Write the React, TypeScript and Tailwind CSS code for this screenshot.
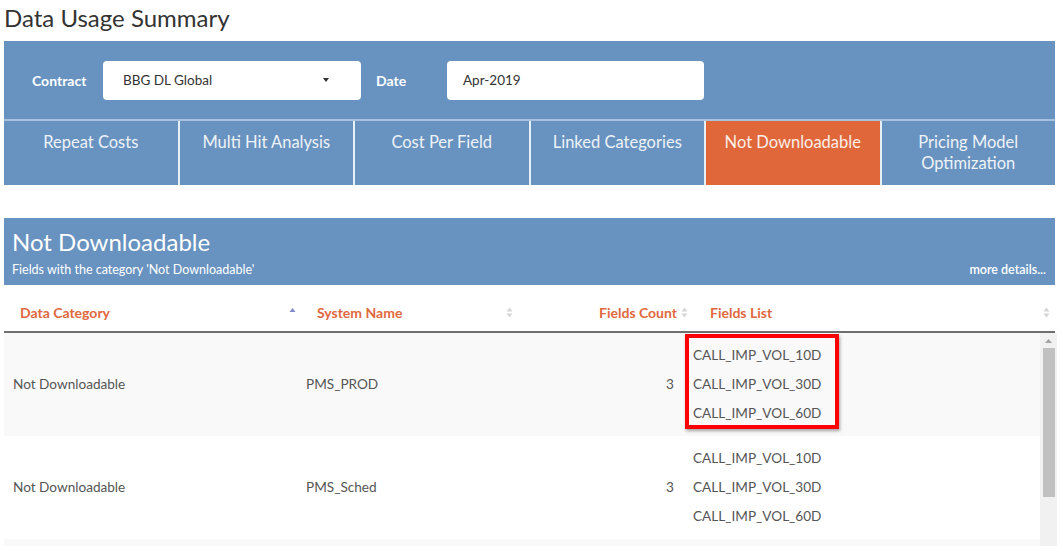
import React from "react";

const SortBoth = () => (
  <svg width="7" height="11" viewBox="0 0 7 11" className="shrink-0">
    <path d="M3.5 0.5 L6.5 4.5 H0.5 Z" fill="#d6d6d6" />
    <path d="M3.5 10.5 L6.5 6.5 H0.5 Z" fill="#d6d6d6" />
  </svg>
);

const SortAsc = () => (
  <svg width="7" height="11" viewBox="0 0 7 11" className="shrink-0">
    <path d="M3.5 1 L6.5 5 H0.5 Z" fill="#7f87c9" />
  </svg>
);

const tabs = [
  "Repeat Costs",
  "Multi Hit Analysis",
  "Cost Per Field",
  "Linked Categories",
  "Not Downloadable",
  "Pricing Model Optimization",
];

const fields = ["CALL_IMP_VOL_10D", "CALL_IMP_VOL_30D", "CALL_IMP_VOL_60D"];

const rows = [
  { cat: "Not Downloadable", sys: "PMS_PROD", count: 3, bg: "bg-[#f9f9f9]", mark: true },
  { cat: "Not Downloadable", sys: "PMS_Sched", count: 3, bg: "bg-white", mark: false },
];

export default function App() {
  return (
    <div className="w-[1061px] h-[546px] overflow-hidden bg-white font-['Lato',sans-serif] text-[#333]">
      <h1 className="h-[41px] pl-[4px] pt-[2px] text-[24px] leading-[32px] font-normal text-[#333]">
        Data Usage Summary
      </h1>

      {/* Filter + tabs panel */}
      <div className="ml-[4px] w-[1051px] bg-[#6892bf]">
        <div className="flex items-center h-[78px]">
          <div className="ml-[28px] w-[71px] text-[14px] font-bold text-white">Contract</div>
          <div className="w-[258px] h-[39px] rounded-[4px] bg-white flex items-center pl-[20px] pr-[32px] text-[13.5px] text-[#333]">
            <span className="flex-1">BBG DL Global</span>
            <svg width="6" height="4" viewBox="0 0 6 4">
              <path d="M0 0 H6 L3 4 Z" fill="#333" />
            </svg>
          </div>
          <div className="ml-[15px] w-[71px] text-[14px] font-bold text-white">Date</div>
          <div className="w-[257px] h-[39px] rounded-[4px] bg-white flex items-center pl-[16px] text-[13.5px] text-[#333]">
            Apr-2019
          </div>
        </div>
        <div className="flex h-[66px] border-t-2 border-[#a8c1dc]">
          {tabs.map((t, i) => (
            <div
              key={t}
              className={
                "flex-1 flex justify-center pt-[11px] text-center text-[16.5px] leading-[21px] " +
                (i > 0 ? "border-l-2 border-[#e6eef6] " : "") +
                (t === "Not Downloadable" ? "bg-[#e0673a] text-[#fbeee8]" : "text-[#eef3f8]")
              }
            >
              <span className={i === 5 ? "w-[120px]" : ""}>{t}</span>
            </div>
          ))}
        </div>
      </div>

      {/* Section header */}
      <div className="ml-[4px] mt-[33px] w-[1051px] h-[67px] bg-[#6892bf] px-[8px] pt-[9px] text-white">
        <div className="text-[24px] leading-[30px]">Not Downloadable</div>
        <div className="flex items-center mt-[5px] text-[12.5px] leading-[16px]">
          <span className="flex-1">Fields with the category 'Not Downloadable'</span>
          <span className="font-semibold pr-[1px]">more details...</span>
        </div>
      </div>

      {/* Table header */}
      <div className="ml-[4px] w-[1051px] h-[48px] flex items-center pt-[8px] border-b-2 border-[#6f6f6f] text-[14px] font-bold text-[#e0683e]">
        <div className="w-[296px] flex items-center pl-[16px] pr-[4px]">
          <span className="flex-1">Data Category</span>
          <SortAsc />
        </div>
        <div className="w-[217px] flex items-center pl-[17px] pr-[4px]">
          <span className="flex-1">System Name</span>
          <SortBoth />
        </div>
        <div className="w-[175px] flex items-center justify-end pr-[4px] gap-[4px]">
          <span>Fields Count</span>
          <SortBoth />
        </div>
        <div className="flex-1 flex items-center pl-[18px] pr-[5px]">
          <span className="flex-1">Fields List</span>
          <SortBoth />
        </div>
      </div>

      {/* Table body */}
      <div className="ml-[4px] w-[1053px] h-[213px] flex overflow-hidden">
        <div className="flex-1 text-[13.6px] text-[#555]">
          {rows.map((r, idx) => (
            <div key={idx} className={"flex items-center h-[103px] " + r.bg}>
              <div className="w-[296px] pl-[9px]">{r.cat}</div>
              <div className="w-[217px] pl-[6px]">{r.sys}</div>
              <div className="w-[164px] pr-[7px] text-right">{r.count}</div>
              <div className="relative flex-1 self-stretch flex flex-col justify-center pl-[12px]">
                {fields.map((f) => (
                  <div key={f} className="leading-[29px]">{f}</div>
                ))}
                {r.mark && (
                  <div className="absolute left-[4px] top-[1px] w-[154px] h-[95px] border-[4px] border-[#ff0000] shadow-[1px_2px_3px_rgba(0,0,0,0.35)]" />
                )}
              </div>
            </div>
          ))}
          <div className="h-[20px] bg-[#f9f9f9]" />
        </div>
        {/* scrollbar */}
        <div className="w-[17px] bg-[#f1f1f1] flex flex-col items-center">
          <svg width="7" height="4" viewBox="0 0 7 4" className="mt-[6px]">
            <path d="M3.5 0 L7 4 H0 Z" fill="#a3a3a3" />
          </svg>
          <div className="mt-[5px] w-[12px] h-[149px] bg-[#c1c1c1]" />
        </div>
      </div>
    </div>
  );
}
